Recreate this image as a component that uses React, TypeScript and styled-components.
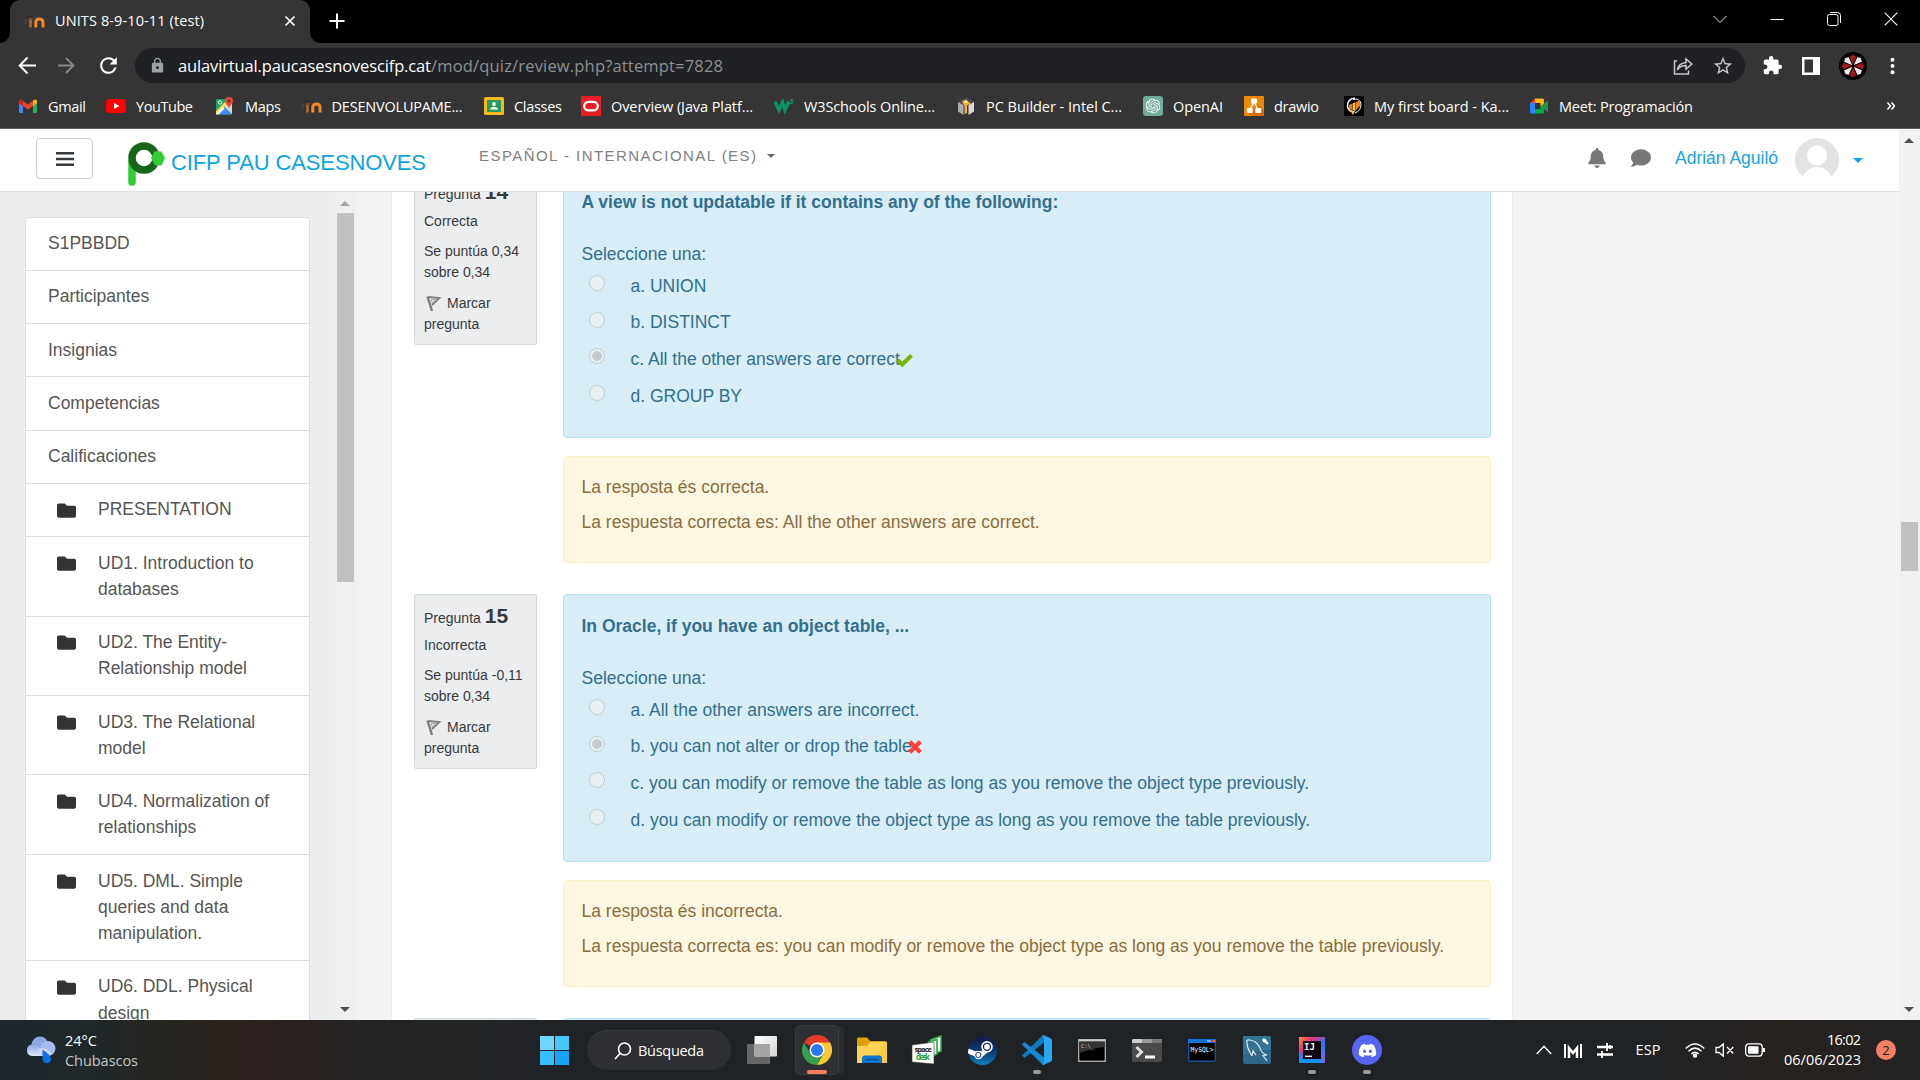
import React, { useLayoutEffect, useRef, useState } from "react";
import styled, { createGlobalStyle } from "styled-components";
import { FaBell, FaComment, FaDiscord, FaSteam, FaFolder } from "react-icons/fa";
import { MdExtension, MdStarBorder, MdLock, MdRefresh } from "react-icons/md";
import { SiOpenai } from "react-icons/si";

const ARIAL = '"Liberation Sans", Arial, sans-serif';
const UI = '"Open Sans", "Noto Sans", sans-serif';

const Global = createGlobalStyle`
  * { box-sizing: border-box; }
  body { margin: 0; background: #000; overflow: hidden; }
  svg { display: block; flex: none; }
`;

const Screen = styled.div`
  width: 1920px;
  height: 1080px;
  display: flex;
  flex-direction: column;
  overflow: hidden;
  font-family: ${ARIAL};
`;

/* ---------- text that keeps to a given measure ---------- */
const Measured = styled.span<{ $w: number }>`
  display: block;
  flex: none;
  width: ${(p) => p.$w}px;
  white-space: pre;
`;

function Fit({ w, children }: { w: number; children: string }) {
  const ref = useRef<HTMLSpanElement>(null);
  const [spacing, setSpacing] = useState(0);
  useLayoutEffect(() => {
    const el = ref.current;
    if (el) setSpacing((w - el.getBoundingClientRect().width) / Math.max(1, children.length - 1));
  }, [w, children]);
  return (
    <Measured $w={w}>
      <span ref={ref} style={{ letterSpacing: spacing }}>{children}</span>
    </Measured>
  );
}

/* ---------- browser chrome ---------- */
const TabStrip = styled.div`
  height: 43px;
  flex: none;
  background: #000;
  display: flex;
  align-items: stretch;
  padding-left: 10px;
`;
const Tab = styled.div`
  position: relative;
  width: 300px;
  background: #353535;
  border-radius: 10px 10px 0 0;
  display: flex;
  align-items: center;
  padding: 0 14px 2px 15px;
  gap: 10px;
  color: #fff;
  font: 14.5px ${UI};
  &::before, &::after {
    content: "";
    position: absolute;
    bottom: 0;
    width: 10px;
    height: 10px;
  }
  &::before { left: -10px; background: radial-gradient(circle at 0 0, transparent 9.5px, #353535 10px); }
  &::after { right: -10px; background: radial-gradient(circle at 100% 0, transparent 9.5px, #353535 10px); }
`;
const Spacer = styled.div` flex: 1; `;
const NewTab = styled.div` display: flex; align-items: center; padding: 0 0 1px 19px; `;
const WindowButtons = styled.div`
  display: flex;
  align-items: center;
  padding: 0 22px 6px 0;
  gap: 43px;
`;
const Toolbar = styled.div`
  height: 45px;
  flex: none;
  background: #353535;
  display: flex;
  align-items: center;
  padding: 0 13px 0 18px;
`;
const NavButtons = styled.div` display: flex; width: 117px; gap: 21px; align-items: center; `;
const Omnibox = styled.div`
  width: 1610px;
  height: 35px;
  border-radius: 18px;
  background: #202124;
  display: flex;
  align-items: center;
  padding: 0 11px 0 14px;
  color: #fff;
  font: 16.5px ${UI};
`;
const LockSlot = styled.div` width: 29px; color: #9aa0a6; `;
const Path = styled.div` color: #8f9093; `;
const OmniActions = styled.div` display: flex; gap: 19px; color: #c7c7c7; align-items: center; `;
const ToolActions = styled.div`
  display: flex;
  flex: 1;
  align-items: center;
  padding-left: 17px;
  color: #fff;
  gap: 18px;
`;
const Bookmarks = styled.div`
  height: 41px;
  flex: none;
  background: #353535;
  border-bottom: 1px solid #606060;
  display: flex;
  align-items: center;
  padding: 0 0 4px 18px;
  color: #fff;
  font: 14.5px ${UI};
`;
const Bookmark = styled.div<{ $w: number }>`
  width: ${(p) => p.$w}px;
  flex: none;
  display: flex;
  align-items: center;
  gap: 10px;
`;

const MoodleIcon = () => (
  <svg width="20" height="20" viewBox="0 0 20 20" fill="none">
    <path d="M0 7L5 4.500L8 5.500L5 8Z" fill="#2b2622" />
    <path d="M1 8V13" stroke="#5a4a40" strokeWidth="1" />
    <path d="M5.500 16.500V8.500" stroke="#a8663a" strokeWidth="2.800" />
    <path d="M3 8.500Q5 6.500 8 8" stroke="#6b4a34" strokeWidth="1.600" />
    <path d="M10.800 16.500V11.500Q10.800 8 14.400 8T18 11.500V16.500" stroke="#f08a2c" strokeWidth="3" />
  </svg>
);
const icons: Record<string, React.ReactNode> = {
  gmail: (
    <svg width="20" height="20" viewBox="0 0 20 20">
      <path d="M1 5V15.500Q1 17 2.500 17H5V8Z" fill="#4285f4" />
      <path d="M19 5V15.500Q19 17 17.500 17H15V8Z" fill="#34a853" />
      <path d="M15 4.500L17 3.400Q19 3.400 19 5.500V7L15 10Z" fill="#fbbc04" />
      <path d="M1 5.500Q1 3.400 3 3.400L10 8.500L15 4.500V10L10 13.500L1 7Z" fill="#ea4335" />
      <path d="M1 5.500Q1 3.400 3.200 3.500L5 4.800V10L1 7Z" fill="#c5221f" />
    </svg>
  ),
  youtube: (
    <svg width="20" height="20" viewBox="0 0 20 20">
      <rect x="0" y="3" width="20" height="14" rx="3.500" fill="#f00" />
      <path d="M8 7L13.500 10L8 13Z" fill="#fff" />
    </svg>
  ),
  maps: (
    <svg width="20" height="20" viewBox="0 0 20 20">
      <rect x="1" y="3" width="16" height="15.500" rx="1" fill="#1fa463" />
      <path d="M17 5V18L9 10.500Z" fill="#d5d8db" />
      <path d="M1.500 18.500L9 11L16.500 18.500Z" fill="#4a89f3" />
      <path d="M1 15L12 4L14 6L2 18.500H1Z" fill="#ffe047" />
      <path d="M1 18L8 11L9.500 12.500L3.500 18.500Z" fill="#fff" />
      <circle cx="5" cy="6.500" r="1.700" fill="none" stroke="#fff" strokeWidth=".9" />
      <path d="M14 1A4 4 0 0 1 18 5C18 8 14.500 9 14 13C13.500 9 10 8 10 5A4 4 0 0 1 14 1Z" fill="#e8453c" />
      <circle cx="14" cy="5" r="1.400" fill="#8b1a14" />
    </svg>
  ),
  moodle: <MoodleIcon />,
  classes: (
    <svg width="20" height="20" viewBox="0 0 20 20">
      <rect width="20" height="18" y="1" rx="1.500" fill="#f5ba15" />
      <rect x="3" y="4" width="14" height="12" fill="#2a9d5c" />
      <circle cx="10" cy="8" r="1.900" fill="#fff" />
      <path d="M6 13.500Q6 11 10 11T14 13.500Z" fill="#fff" />
    </svg>
  ),
  oracle: (
    <svg width="20" height="20" viewBox="0 0 20 20">
      <rect width="20" height="20" fill="#ec1c24" />
      <rect x="3.200" y="5.800" width="13.600" height="8.600" rx="4.300" fill="none" stroke="#fff" strokeWidth="2.200" />
    </svg>
  ),
  w3: (
    <svg width="20" height="20" viewBox="0 0 20 20" fill="none" stroke="#059862">
      <path d="M1 5.500L5 14L8.500 6.500L11 14L15 5.500" strokeWidth="3.400" />
      <path d="M16 3.500H18.500L17.300 5.200Q19 5.500 18.300 7Q17.500 8 16 7.300" strokeWidth="1.100" />
    </svg>
  ),
  pcb: (
    <svg width="20" height="20" viewBox="0 0 20 20">
      <path d="M10 1.500L18 5.500L10 9.500L2 5.500Z" fill="#4b4b5f" />
      <path d="M2 6L7.500 9V19L2 15.500Z" fill="#a9abb5" />
      <path d="M18 6L12.500 9V19L18 15.500Z" fill="#d7d8de" />
      <path d="M6 5.500L10 3.500L15 8L11 9V17L8.500 18V10Z" fill="#f3b229" />
      <path d="M8 6L10 5L12 6L10 7Z" fill="#fff" />
    </svg>
  ),
  openai: (
    <svg width="20" height="20" viewBox="0 0 20 20">
      <rect width="20" height="20" rx="3" fill="#74a99b" />
      <SiOpenai x={2.500} y={2.500} size={15} color="#fff" />
    </svg>
  ),
  drawio: (
    <svg width="20" height="20" viewBox="0 0 20 20">
      <rect width="20" height="20" rx="1" fill="#f08705" />
      <path d="M14 8L20 14V20H8L5 17Z" fill="#df6c0c" />
      <path d="M10 6L5.500 14M10 6L14.500 14" stroke="#fff" strokeWidth="1.500" />
      <rect x="7" y="2.500" width="6" height="5" rx="1" fill="#fff" />
      <rect x="2.800" y="12" width="6" height="5" rx="1" fill="#fff" />
      <rect x="11.200" y="12" width="6" height="5" rx="1" fill="#fff" />
    </svg>
  ),
  kanban: (
    <svg width="20" height="20" viewBox="0 0 20 20">
      <rect width="20" height="20" fill="#000" />
      <path d="M11 2Q3 3 3.500 10.500Q4 14 7 15.500" fill="none" stroke="#fff" strokeWidth="1.400" />
      <path d="M9 3.500Q16 1.500 17 8Q17 15 11 17" fill="none" stroke="#fff" strokeWidth="1" />
      <path d="M5 13V9L8 7.500V14Z" fill="#ef7c20" />
      <path d="M8.500 14V7.500L11.500 6V15Z" fill="#f9c22e" />
      <path d="M12 14V6L16 4V10Z" fill="#ef7c20" />
      <path d="M6 14L11 15L9 19Z" fill="#f9c22e" />
    </svg>
  ),
  meet: (
    <svg width="20" height="20" viewBox="0 0 20 20">
      <path d="M1 7H6V14H1Z" fill="#2684fc" />
      <path d="M1 7L6 2.500V7Z" fill="#ea4335" />
      <path d="M6 2.500H13.500Q15 2.500 15 4V9L11.500 11V7H6Z" fill="#ffba00" />
      <path d="M6 13H11.500V10L15 8V16Q15 17.500 13.500 17.500H6Z" fill="#00ac47" />
      <path d="M1 13H6V17.500H2.500Q1 17.500 1 16Z" fill="#2684fc" />
      <path d="M12 10L18 5Q19 5 19 6V15Q19 16 18 15.500Z" fill="#1f9a43" />
    </svg>
  ),
};

const bookmarks: [string, string, number, number][] = [
  ["gmail", "Gmail", 38, 88],
  ["youtube", "YouTube", 57, 109],
  ["maps", "Maps", 36, 86.5],
  ["moodle", "DESENVOLUPAME...", 131, 182.5],
  ["classes", "Classes", 48, 97],
  ["oracle", "Overview (Java Platf...", 142, 193],
  ["w3", "W3Schools Online...", 131, 182],
  ["pcb", "PC Builder - Intel C...", 136, 187],
  ["openai", "OpenAI", 50, 101],
  ["drawio", "drawio", 45, 100],
  ["kanban", "My first board - Ka...", 135, 185],
  ["meet", "Meet: Programación", 134, 350],
];

const UmbrellaAvatar = () => (
  <svg width="28" height="28" viewBox="-14 -14 28 28">
    <circle r="14" fill="#000" />
    {[0, 45, 90, 135, 180, 225, 270, 315].map((a, i) => (
      <path key={a} d="M0 0L-3.700 -9.500L0 -11.500L3.700 -9.500Z" transform={`rotate(${a})`} fill={i % 2 ? "#e9e9e9" : "#a81620"} stroke="#000" strokeWidth=".7" />
    ))}
  </svg>
);

function Browser() {
  return (
    <>
      <TabStrip>
        <Tab>
          <MoodleIcon />
          <Fit w={149}>UNITS 8-9-10-11 (test)</Fit>
          <Spacer />
          <svg width="12" height="12" viewBox="0 0 12 12" stroke="#fff" strokeWidth="1.700"><path d="M1.500 1.500L10.500 10.500M10.500 1.500L1.500 10.500" /></svg>
        </Tab>
        <NewTab>
          <svg width="16" height="16" viewBox="0 0 16 16" stroke="#fff" strokeWidth="2"><path d="M8 .5V15.500M.5 8H15.500" /></svg>
        </NewTab>
        <Spacer />
        <WindowButtons>
          <svg width="14" height="14" viewBox="0 0 14 14" fill="none" stroke="#ddd" strokeWidth="1"><path d="M.5 4L7 10.500L13.500 4" /></svg>
          <svg width="14" height="14" viewBox="0 0 14 14" fill="none" stroke="#fff" strokeWidth="1"><path d="M.5 7.500H13.500" /></svg>
          <svg width="14" height="14" viewBox="0 0 14 14" fill="none" stroke="#fff" strokeWidth="1"><rect x=".5" y="2.500" width="10.500" height="11" rx="2" /><path d="M3 .5H10.500Q13.500 .5 13.500 3.500V11" /></svg>
          <svg width="14" height="14" viewBox="0 0 14 14" fill="none" stroke="#fff" strokeWidth="1.100"><path d="M.7 .7L13.300 13.300M13.300 .7L.7 13.300" /></svg>
        </WindowButtons>
      </TabStrip>
      <Toolbar>
        <NavButtons>
          <svg width="19" height="19" viewBox="0 0 19 19" fill="none" stroke="#fff" strokeWidth="2"><path d="M18 9.500H2M9.500 1.500L1.700 9.500L9.500 17.500" /></svg>
          <svg width="17" height="17" viewBox="0 0 17 17" fill="none" stroke="#868686" strokeWidth="1.900"><path d="M0 8.500H15M8 1L15.500 8.500L8 16" /></svg>
          <MdRefresh size={25} color="#fff" />
        </NavButtons>
        <Omnibox>
          <LockSlot><MdLock size={17} /></LockSlot>
          <Fit w={253}>aulavirtual.paucasesnovescifp.cat</Fit>
          <Path><Fit w={292}>/mod/quiz/review.php?attempt=7828</Fit></Path>
          <Spacer />
          <OmniActions>
            <svg width="20" height="20" viewBox="0 0 20 20" fill="none" stroke="#c7c7c7" strokeWidth="1.500"><path d="M4 5H1.500V18H15.500V14.500" /><path d="M4.500 14Q5 7.500 13 6.500V3L18.800 8L13 13V9.500Q7 9.500 4.500 14Z" /></svg>
            <MdStarBorder size={22} />
          </OmniActions>
        </Omnibox>
        <ToolActions>
          <MdExtension size={21} />
          <svg width="20" height="20" viewBox="0 0 20 20"><rect x="1" y="1" width="18" height="18" fill="#fff" /><rect x="3.500" y="3.500" width="8.500" height="13" fill="#353535" /></svg>
          <UmbrellaAvatar />
          <svg width="20" height="20" viewBox="0 0 20 20" fill="#fff"><circle cx="7.500" cy="3.700" r="2" /><circle cx="7.500" cy="10" r="2" /><circle cx="7.500" cy="16.300" r="2" /></svg>
        </ToolActions>
      </Toolbar>
      <Bookmarks>
        {bookmarks.map(([icon, label, w, span]) => (
          <Bookmark key={label} $w={span}>
            {icons[icon]}
            <Fit w={w}>{label}</Fit>
          </Bookmark>
        ))}
        <svg width="16" height="12" viewBox="0 0 16 12" fill="none" stroke="#fff" strokeWidth="1.600"><path d="M8.500 2.500L11.500 6L8.500 9.500M12.500 2.500L15.500 6L12.500 9.500" /></svg>
      </Bookmarks>
    </>
  );
}

/* ---------- page ---------- */
const Page = styled.div` flex: 1; min-height: 0; display: flex; background: #f3f3f3; `;
const Column = styled.div` width: 1899px; display: flex; flex-direction: column; `;
const Navbar = styled.div`
  height: 63px;
  flex: none;
  background: #fff;
  border-bottom: 1px solid #dfe1e3;
  display: flex;
  align-items: flex-start;
  padding: 9px 36px 0 36px;
`;
const Hamburger = styled.div`
  width: 57px;
  height: 41px;
  border: 1px solid #ccc;
  border-radius: 4px;
  display: flex;
  align-items: center;
  justify-content: center;
`;
const Brand = styled.div`
  display: flex;
  margin: 4px 0 0 35px;
  gap: 5px;
  width: 351px;
  font-size: 22px;
  line-height: 41px;
  color: #0ba6df;
`;
const Language = styled.div`
  font-size: 15px;
  line-height: 36px;
  color: #808080;
  display: flex;
  align-items: center;
  gap: 11px;
`;
const Triangle = styled.i<{ $c: string; $s: number; $up?: boolean }>`
  width: 0;
  height: 0;
  border: ${(p) => p.$s}px solid transparent;
  ${(p) => (p.$up ? "border-bottom" : "border-top")}: ${(p) => p.$s}px solid ${(p) => p.$c};
  ${(p) => (p.$up ? "border-top" : "border-bottom")}-width: 0;
`;
const UserMenu = styled.div`
  display: flex;
  align-items: center;
  height: 44px;
  color: #777;
`;
const Alerts = styled.div`
  display: flex;
  align-items: center;
  gap: 24px;
  padding-bottom: 4px;
`;
const UserName = styled.div`
  margin: 0 17px 4px 24px;
  font-size: 17.5px;
  color: #18a3dd;
`;
const Gap = styled.div<{ $w: number }>` width: ${(p) => p.$w}px; flex: none; `;

const Body = styled.div` flex: 1; min-height: 0; display: flex; overflow: hidden; `;
const Drawer = styled.div`
  width: 335px;
  background: #ecedef;
  padding: 25px 25px 0 25px;
  overflow: hidden;
`;
const CourseList = styled.div`
  background: #fff;
  border: 1px solid #dcdddf;
  border-radius: 4px 4px 0 0;
`;
const CourseItem = styled.div`
  display: flex;
  padding: 12.600px 20px 13.400px 22px;
  border-bottom: 1px solid #dcdddf;
  font-size: 17.5px;
  line-height: 26.25px;
  color: #565656;
  &:first-child { margin-top: -0.400px; }
`;
const FolderSlot = styled.div`
  width: 50px;
  padding: 4.300px 0 0 9px;
  flex: none;
  color: #343434;
`;
const DrawerScroll = styled.div`
  width: 21px;
  background: #f0f0f1;
  display: flex;
  flex-direction: column;
  align-items: center;
  padding: 9px 1px 8px 0;
`;
const DrawerThumb = styled.div`
  width: 17px;
  height: 369px;
  background: #c1c1c1;
  margin: 7px 0 auto;
`;
const Main = styled.div`
  width: 1122px;
  margin-left: 35px;
  background: #fff;
  border: 1px solid #ebebeb;
  border-width: 0 1px;
  padding-left: 22px;
`;
const Questions = styled.div` margin-top: -21.750px; `;
const Question = styled.div`
  display: flex;
  align-items: flex-start;
  height: 424px;
  gap: 26px;
`;
const Info = styled.div`
  width: 123px;
  height: 174.500px;
  flex: none;
  background: #ecedef;
  border: 1px solid #d4d9dd;
  border-radius: 2px;
  padding: 9px 0 0 9px;
  font-size: 14px;
  line-height: 21px;
  color: #373a3c;
`;
const InfoBlock = styled.div` margin-bottom: 9.600px; `;
const NumberLine = styled.div`
  display: flex;
  align-items: baseline;
  gap: 4px;
  height: 21px;
  margin-bottom: 9.300px;
  line-height: 24px;
`;
const Number = styled.b` font-size: 21px; `;
const FlagLine = styled.div` display: flex; align-items: center; padding-left: 2px; gap: 6px; `;
const Answers = styled.div` width: 928px; font-size: 17.5px; line-height: 26.25px; `;
const Formulation = styled.div`
  height: 267.500px;
  background: #d9edf6;
  border: 1px solid #b5dff0;
  border-radius: 4px;
  padding: 17.500px;
  color: #32708f;
`;
const Title = styled.div` font-weight: bold; margin-bottom: 26.250px; `;
const Options = styled.div``;
const Option = styled.div`
  display: flex;
  height: 36.750px;
  padding: 5.100px 0 5px 7px;
`;
const Radio = styled.div<{ $on: boolean }>`
  width: 16px;
  height: 16px;
  flex: none;
  margin: 2.300px 26px 0 0;
  border-radius: 50%;
  border: 1.300px solid #c5cdd0;
  background: ${(p) => (p.$on ? "radial-gradient(circle, #c4cacc 4.500px, #eaf1f4 5.200px)" : "#eaf1f4")};
`;
const MarkSlot = styled.div` margin: 7px 0 0 -4px; `;
const Feedback = styled.div`
  height: 106.500px;
  margin-top: 18.500px;
  background: #fdf6e2;
  border: 1px solid #faeec4;
  border-radius: 4px;
  padding: 16.800px 17.500px;
  color: #8a6d3b;
`;
const Line = styled.div` margin-bottom: 8.750px; `;
const PageScroll = styled.div`
  width: 21px;
  background: #f1f1f1;
  display: flex;
  flex-direction: column;
  align-items: center;
  padding: 9px 1px 8px 0;
`;
const PageThumb = styled.div`
  width: 17px;
  height: 49px;
  background: #c1c1c1;
  margin: 379px 0 auto;
`;

const courses: [string, boolean][] = [
  ["S1PBBDD", false],
  ["Participantes", false],
  ["Insignias", false],
  ["Competencias", false],
  ["Calificaciones", false],
  ["PRESENTATION", true],
  ["UD1. Introduction to databases", true],
  ["UD2. The Entity-Relationship model", true],
  ["UD3. The Relational model", true],
  ["UD4. Normalization of relationships", true],
  ["UD5. DML. Simple queries and data manipulation.", true],
  ["UD6. DDL. Physical design", true],
];

const Check = () => (
  <svg width="17" height="15" viewBox="0 0 17 15" fill="none" stroke="#76b500" strokeWidth="4"><path d="M1.500 7L6.300 11.500L15.500 2.300" /></svg>
);
const Cross = () => (
  <svg width="14" height="14" viewBox="0 0 14 14" fill="none" stroke="#fe4136" strokeWidth="4.200"><path d="M1.700 1.700L12.300 12.300M12.300 1.700L1.700 12.300" /></svg>
);
const Flag = () => (
  <svg width="15" height="17" viewBox="0 0 15 17" fill="none" stroke="#7c7c7c">
    <path d="M1.500 1.500L6 16" strokeWidth="2.400" />
    <path d="M2.500 2L13.500 3L6 10" strokeWidth="1.800" />
    <path d="M5 4.500L10 4.700L6.500 8Z" strokeWidth="1" stroke="#a5a5a5" />
  </svg>
);

type Q = { n: string; state: string; mark: string; title: string; options: string[]; picked: number; ok: boolean; feedback: string[] };
const questions: Q[] = [
  {
    n: "14", state: "Correcta", mark: "0,34", title: "A view is not updatable if it contains any of the following:",
    options: ["a. UNION", "b. DISTINCT", "c. All the other answers are correct", "d. GROUP BY"], picked: 2, ok: true,
    feedback: ["La resposta és correcta.", "La respuesta correcta es: All the other answers are correct."],
  },
  {
    n: "15", state: "Incorrecta", mark: "-0,11", title: "In Oracle, if you have an object table, ...",
    options: ["a. All the other answers are incorrect.", "b. you can not alter or drop the table", "c. you can modify or remove the table as long as you remove the object type previously.", "d. you can modify or remove the object type as long as you remove the table previously."],
    picked: 1, ok: false,
    feedback: ["La resposta és incorrecta.", "La respuesta correcta es: you can modify or remove the object type as long as you remove the table previously."],
  },
];

const Logo = () => (
  <svg width="38" height="44" viewBox="0 0 38 44">
    <path d="M4 20V40" stroke="#2fce33" strokeWidth="7.500" strokeLinecap="round" />
    <circle cx="16" cy="16" r="12" fill="#fff" stroke="#16651b" strokeWidth="7.500" />
    <path d="M26.500 9.500L33.500 9.500L37 16L33.500 23.500H27L23 16Z" fill="#2fce33" />
  </svg>
);

function Moodle() {
  return (
    <Page>
      <Column>
        <Navbar>
          <Hamburger>
            <svg width="18" height="14" viewBox="0 0 18 14" stroke="#343a40" strokeWidth="2.400"><path d="M0 1.200H18M0 7H18M0 12.800H18" /></svg>
          </Hamburger>
          <Brand><Logo /><Fit w={255}>CIFP PAU CASESNOVES</Fit></Brand>
          <Language><Fit w={277}>ESPAÑOL - INTERNACIONAL (ES)</Fit><Triangle $c="#666" $s={4.5} /></Language>
          <Spacer />
          <UserMenu>
            <Alerts><FaBell size={20} /><FaComment size={20} /></Alerts>
            <UserName><Fit w={103}>Adrián Aguiló</Fit></UserName>
            <svg width="44" height="44" viewBox="0 0 44 44">
              <circle cx="22" cy="22" r="22" fill="#e3e3e3" />
              <circle cx="22" cy="17.500" r="10" fill="#fff" />
              <path d="M7 39.500Q12 29 22 29T37 39.500Q31 44 22 44T7 39.500Z" fill="#fff" />
            </svg>
            <Gap $w={14} /><Triangle $c="#0ba6df" $s={5} />
          </UserMenu>
        </Navbar>
        <Body>
          <Drawer>
            <CourseList>
              {courses.map(([name, folder]) => (
                <CourseItem key={name}>
                  {folder && <FolderSlot><FaFolder size={19} /></FolderSlot>}
                  <span>{name}</span>
                </CourseItem>
              ))}
            </CourseList>
          </Drawer>
          <DrawerScroll>
            <Triangle $c="#a3a3a3" $s={5} $up />
            <DrawerThumb />
            <Triangle $c="#505050" $s={5} />
          </DrawerScroll>
          <Main>
            <Questions>
              {questions.map((q) => (
                <Question key={q.n}>
                  <Info>
                    <NumberLine>Pregunta <Number>{q.n}</Number></NumberLine>
                    <InfoBlock>{q.state}</InfoBlock>
                    <InfoBlock>Se puntúa {q.mark}<br />sobre 0,34</InfoBlock>
                    <FlagLine><Flag />Marcar</FlagLine>
                    pregunta
                  </Info>
                  <Answers>
                    <Formulation>
                      <Title>{q.title}</Title>
                      Seleccione una:
                      <Options>
                        {q.options.map((o, i) => (
                          <Option key={o}>
                            <Radio $on={i === q.picked} />
                            {o}
                            {i === q.picked && <MarkSlot>{q.ok ? <Check /> : <Cross />}</MarkSlot>}
                          </Option>
                        ))}
                      </Options>
                    </Formulation>
                    <Feedback>{q.feedback.map((f) => <Line key={f}>{f}</Line>)}</Feedback>
                  </Answers>
                </Question>
              ))}
              <Question>
                <Info />
                <Answers><Formulation /></Answers>
              </Question>
            </Questions>
          </Main>
        </Body>
      </Column>
      <PageScroll>
        <Triangle $c="#505050" $s={5} $up />
        <PageThumb />
        <Triangle $c="#505050" $s={5} />
      </PageScroll>
    </Page>
  );
}

/* ---------- taskbar ---------- */
const Taskbar = styled.div`
  height: 60px;
  flex: none;
  display: flex;
  align-items: center;
  background: linear-gradient(90deg, #1d272d 0, #20282a 90px, #27251f 170px, #2d211e 250px, #222324 400px, #202326 560px, #202326 1640px, #28221f 1780px, #222223 1920px);
  color: #fff;
  font: 14.5px/20px ${UI};
  padding-left: 26px;
`;
const Weather = styled.div` width: 501px; display: flex; align-items: center; gap: 9px; `;
const Stack = styled.div` display: flex; flex-direction: column; align-items: flex-end; `;
const WeatherText = styled.div` display: flex; flex-direction: column; padding-top: 1px; `;
const Dim = styled.div` color: #c4c6c7; `;
const Start = styled.div`
  display: grid;
  grid-template-columns: 14px 14px;
  gap: 1px;
  margin: 0 18px 0 13px;
`;
const Pane = styled.i<{ $c: string }>` height: 14px; background: ${(p) => p.$c}; `;
const SearchPill = styled.div`
  width: 144px;
  height: 40px;
  border-radius: 20px;
  background: #2d2f32;
  border-top: 1px solid #3a3c3f;
  display: flex;
  align-items: center;
  padding-left: 27px;
  gap: 6px;
  margin-right: 3.500px;
`;
const Slot = styled.div`
  position: relative;
  width: 55px;
  height: 60px;
  flex: none;
  display: flex;
  align-items: center;
  justify-content: center;
`;
const ActiveTile = styled.div`
  width: 44px;
  height: 50px;
  border-radius: 5px;
  background: #2e3033;
  border: 1px solid #3b3d40;
  box-shadow: 6px 0 0 -1px #2a2c2e;
  display: flex;
  align-items: center;
  justify-content: center;
  flex: none;
`;
const Indicator = styled.i<{ $w: number; $c: string }>`
  position: absolute;
  bottom: 6px;
  left: ${(p) => (55 - p.$w) / 2}px;
  width: ${(p) => p.$w}px;
  height: 4px;
  border-radius: 2px;
  background: ${(p) => p.$c};
`;
const Tray = styled.div` display: flex; align-items: center; flex: 1; justify-content: flex-end; padding-right: 24px; `;
const Badge = styled.div`
  width: 20px;
  height: 20px;
  border-radius: 50%;
  background: #f57f66;
  color: #1b1b1b;
  font-size: 13px;
  text-align: center;
  margin-left: 15px;
`;
const Round = styled.div<{ $bg: string; $s: number }>`
  width: ${(p) => p.$s}px;
  height: ${(p) => p.$s}px;
  border-radius: 50%;
  overflow: hidden;
  background: ${(p) => p.$bg};
  display: flex;
  align-items: center;
  justify-content: center;
`;
const MONO = '"DejaVu Sans Mono", monospace';

const TaskIcons = {
  tasks: (
    <svg width="30" height="28" viewBox="0 0 30 28">
      <defs><linearGradient id="tv" x1="0" y1="0" x2="1" y2="1"><stop offset="0" stopColor="#fff" /><stop offset="1" stopColor="#d5d5d5" /></linearGradient></defs>
      <rect y="8" width="23" height="20" rx="1" fill="#666" />
      <rect x="7.500" y="0" width="22.500" height="20.500" rx="1" fill="url(#tv)" />
      <path d="M7.500 8H23V20.500H7.500Z" fill="#a5a5a5" />
    </svg>
  ),
  chrome: (
    <svg width="30" height="30" viewBox="-15 -15 30 30">
      <path d="M0 0L-13 -7.500A15 15 0 0 1 13 -7.500Z" fill="#e33b2e" />
      <path d="M0 -7.500H13A15 15 0 0 1 0 15L6.500 3.750Z" fill="#fcc934" />
      <path d="M-6.500 3.750L-13 -7.500A15 15 0 0 0 0 15L6.500 3.750Z" fill="#34a050" />
      <circle r="7.500" fill="#fff" /><circle r="6" fill="#2a7bf0" />
    </svg>
  ),
  explorer: (
    <svg width="30" height="27" viewBox="0 0 30 27">
      <path d="M0 2Q0 .5 1.500 .5H10L13 4H28Q30 4 30 6V12H0Z" fill="#dfa10a" />
      <path d="M0 9H10L13 5H30V26H0Z" fill="#fdd257" />
      <path d="M30 5V26H12Z" fill="#fcc62b" opacity=".6" />
      <path d="M5 26V21Q5 18.500 8 18.500H22Q25 18.500 25 21V26Z" fill="#1374cf" />
      <path d="M9 22.500H21" stroke="#0a4f94" strokeWidth="1.500" />
    </svg>
  ),
  spacedesk: (
    <svg width="32" height="30" viewBox="0 0 32 30">
      <path d="M19 5L30 1V16L26 18" fill="#fff" stroke="#2ba84a" strokeWidth="1.600" />
      <path d="M17 7L26 4.500V19L22 21" fill="#fff" stroke="#2ba84a" strokeWidth="1.600" />
      <path d="M1 10L23 7V29L1 27Z" fill="#fff" stroke="#333" strokeWidth=".6" />
      <text x="3.500" y="17" fontFamily={UI} fontWeight="700" fontSize="7.500" textLength="17.500" fill="#222">space</text>
      <text x="5" y="25" fontFamily={UI} fontWeight="700" fontSize="8" textLength="14" fill="#2ba84a">desk</text>
    </svg>
  ),
  steam: <Round $s={29} $bg="linear-gradient(#131a45, #0d3a70 55%, #1281bd)">
    <svg width="29" height="29" viewBox="0 0 29 29">
      <path d="M0 15L12 19.500L18 14.500" stroke="#fff" strokeWidth="5" fill="none" />
      <circle cx="10.500" cy="19" r="4.200" fill="#fff" /><circle cx="10.300" cy="19" r="2.600" fill="none" stroke="#0d3a70" strokeWidth="1" />
      <circle cx="19" cy="10.800" r="5.800" fill="#fff" /><circle cx="19" cy="10.800" r="3.500" fill="none" stroke="#10305f" strokeWidth="1.300" />
    </svg>
  </Round>,
  code: (
    <svg width="30" height="30" viewBox="0 0 30 30">
      <path d="M0 20.500L2.500 23L22 7.500V1L20.500 .5Z" fill="#0f79c4" />
      <path d="M0 9.500L2.500 7L22 22.500V29L20.500 29.500Z" fill="#1688d4" />
      <path d="M21.500 0L28.500 3.200Q30 4 30 5.500V24.500Q30 26 28.500 26.800L21.500 30L20 29.200Q22 28.500 22 26V4Q22 1.500 20 .8Z" fill="#2ba6f2" />
    </svg>
  ),
  cmd: (
    <svg width="28" height="23" viewBox="0 0 28 23">
      <rect x=".7" y=".7" width="26.600" height="21.600" fill="#000" stroke="#a4a4a4" strokeWidth="1.400" />
      <path d="M1 1.500H27" stroke="#ccc" strokeWidth="2" />
      <path d="M1.500 3H26.500V8Q16 9 1.500 14Z" fill="#333" />
      <text x="3" y="9" fontFamily={MONO} fontSize="5.500" fill="#ddd">C:\_</text>
    </svg>
  ),
  terminal: (
    <svg width="30" height="23" viewBox="0 0 30 23">
      <rect width="30" height="23" rx="1.500" fill="#4a4a4a" />
      <path d="M0 4V1.500Q0 0 1.500 0H10V4Z" fill="#ccc" /><path d="M10 0H20V4H10Z" fill="#9a9a9a" /><path d="M20 0H30V4H20Z" fill="#777" />
      <path d="M4.500 8L9.500 13L4.500 18" fill="none" stroke="#ddd" strokeWidth="3" />
      <path d="M13 18H23" stroke="#fff" strokeWidth="3" />
    </svg>
  ),
  mysql: (
    <svg width="28" height="23" viewBox="0 0 28 23">
      <rect x=".7" y=".7" width="26.600" height="21.600" rx="1" fill="#000" stroke="#1c4f96" strokeWidth="1.400" />
      <path d="M0 0H28V4H0Z" fill="#1371dc" /><path d="M24 1H27V3H24Z" fill="#e8603c" /><path d="M19 1H23V3H19Z" fill="#6eb0f3" />
      <text x="2.500" y="12.500" fontFamily={MONO} fontSize="7" textLength="23" lengthAdjust="spacingAndGlyphs" fill="#fff">MySQL&gt;</text>
    </svg>
  ),
  workbench: (
    <svg width="28" height="28" viewBox="0 0 28 28">
      <rect width="28" height="28" rx="2" fill="#2e6788" />
      <path d="M0 0H28V14Q12 13 0 20Z" fill="#3b7b9f" opacity=".6" />
      <path d="M9 20Q4 12 4 7Q3 3 7 4Q14 5 17 12Q18 17 24 19L20 19.500L24 25M9 20L10 15L13 19" fill="none" stroke="#e3edf3" strokeWidth="1.200" />
      <path d="M20 3L22 5L25 8" stroke="#fff" strokeWidth="2.400" />
      <circle cx="21.500" cy="4.500" r="2" fill="#fff" />
    </svg>
  ),
  idea: (
    <svg width="26" height="26" viewBox="0 0 26 26">
      <defs><linearGradient id="ij" x1="0" y1="0" x2="1" y2="1"><stop offset="0" stopColor="#fc8a3c" /><stop offset=".3" stopColor="#e8317c" /><stop offset=".6" stopColor="#2a78f0" /><stop offset="1" stopColor="#9b5fe0" /></linearGradient></defs>
      <rect width="26" height="26" fill="url(#ij)" />
      <path d="M0 12L4 22L0 26ZM4 22H22V26H0Z" fill="#1592f2" />
      <rect x="4" y="4" width="18" height="18" fill="#0a0210" />
      <text x="5" y="13" fontFamily={MONO} fontWeight="700" fontSize="9" fill="#fff">IJ</text>
      <path d="M6 19.300H13" stroke="#fff" strokeWidth="1.400" />
    </svg>
  ),
  discord: <Round $s={30} $bg="#5865f2"><FaDiscord size={19} color="#fff" /></Round>,
};

function Task() {
  return (
    <Taskbar>
      <Weather>
        <svg width="30" height="28" viewBox="0 0 30 28">
          <defs><linearGradient id="cl" x1="0" y1="0" x2="0" y2="1"><stop offset="0" stopColor="#8aa4e6" /><stop offset="1" stopColor="#dfe7fb" /></linearGradient></defs>
          <circle cx="14" cy="9" r="8.500" fill="#8fa6e4" />
          <circle cx="22" cy="12.500" r="7.500" fill="#a9bbee" />
          <path d="M6 8.500A6 6 0 0 1 13 12Q20 12 20 20H6A5.800 5.800 0 0 1 6 8.500Z" fill="url(#cl)" />
          <path d="M13 20V13Q19 10 26 17.500L22 20Z" fill="#cdd9f8" />
          <path d="M16.500 13.500Q25 19 25 23.500A4.300 4.300 0 0 1 16.500 23.500Z" fill="#0f6de8" />
        </svg>
        <WeatherText>
          <Fit w={32}>24°C</Fit>
          <Dim><Fit w={73}>Chubascos</Fit></Dim>
        </WeatherText>
      </Weather>
      <Start><Pane $c="#6fd6fc" /><Pane $c="#47c6fb" /><Pane $c="#35bffb" /><Pane $c="#18a3f6" /></Start>
      <SearchPill>
        <svg width="18" height="18" viewBox="0 0 18 18" fill="none" stroke="#fff" strokeWidth="1.700"><circle cx="10.500" cy="7" r="6" /><path d="M6 11.500L1 17" /></svg>
        <Fit w={66}>Búsqueda</Fit>
      </SearchPill>
      <Slot>{TaskIcons.tasks}</Slot>
      <Slot><ActiveTile>{TaskIcons.chrome}</ActiveTile><Indicator $w={20} $c="#f4805f" /></Slot>
      <Slot>{TaskIcons.explorer}</Slot>
      <Slot>{TaskIcons.spacedesk}</Slot>
      <Slot>{TaskIcons.steam}</Slot>
      <Slot>{TaskIcons.code}<Indicator $w={8} $c="#9a9a9a" /></Slot>
      <Slot>{TaskIcons.cmd}</Slot>
      <Slot>{TaskIcons.terminal}</Slot>
      <Slot>{TaskIcons.mysql}</Slot>
      <Slot>{TaskIcons.workbench}</Slot>
      <Slot>{TaskIcons.idea}<Indicator $w={8} $c="#9a9a9a" /></Slot>
      <Slot>{TaskIcons.discord}<Indicator $w={8} $c="#9a9a9a" /></Slot>
      <Tray>
        <svg width="16" height="10" viewBox="0 0 16 10" fill="none" stroke="#fff" strokeWidth="1.300"><path d="M.7 9L8 1.200L15.300 9" /></svg>
        <Gap $w={12} />
        <svg width="18" height="15" viewBox="0 0 18 15" fill="none" stroke="#fff"><path d="M1 1V15M17 1V15" strokeWidth="2" /><path d="M5 15V5L9 10L13 5V15" strokeWidth="2.500" /></svg>
        <Gap $w={14} />
        <svg width="18" height="15" viewBox="0 0 18 15" stroke="#fff"><path d="M1 4H17M1 11.500H17" strokeWidth="2.600" /><path d="M11 0V8M14 2V6M6 8V15" strokeWidth="1.800" /></svg>
        <Gap $w={21.500} />
        <Fit w={25}>ESP</Fit>
        <Gap $w={24} />
        <svg width="20" height="15" viewBox="0 0 20 15" fill="none" stroke="#fff" strokeWidth="1.500"><path d="M.7 5.500Q10 -3.500 19.300 5.500M3.500 8.300Q10 2 16.500 8.300M6.300 11Q10 7.500 13.700 11" /><circle cx="10" cy="12.500" r="1.500" fill="#fff" /></svg>
        <Gap $w={10} />
        <svg width="19" height="14" viewBox="0 0 19 14" fill="none" stroke="#fff" strokeWidth="1.300"><path d="M1 4.500H4L8.300 .8V13.200L4 9.500H1ZM12 4L18.300 10.500M18.300 4L12 10.500" /></svg>
        <Gap $w={11} />
        <svg width="20" height="14" viewBox="0 0 20 14" fill="none" stroke="#fff"><rect x=".7" y=".9" width="16.500" height="12.200" rx="3" strokeWidth="1.300" /><rect x="3" y="3.300" width="10.500" height="7.400" rx="1" fill="#fff" stroke="none" /><path d="M19 5V9" strokeWidth="2" /></svg>
        <Gap $w={19.500} />
        <Stack><Fit w={34}>16:02</Fit><Fit w={77}>06/06/2023</Fit></Stack>
        <Badge>2</Badge>
      </Tray>
    </Taskbar>
  );
}

export default function App() {
  return (
    <Screen>
      <Global />
      <Browser />
      <Moodle />
      <Task />
    </Screen>
  );
}
